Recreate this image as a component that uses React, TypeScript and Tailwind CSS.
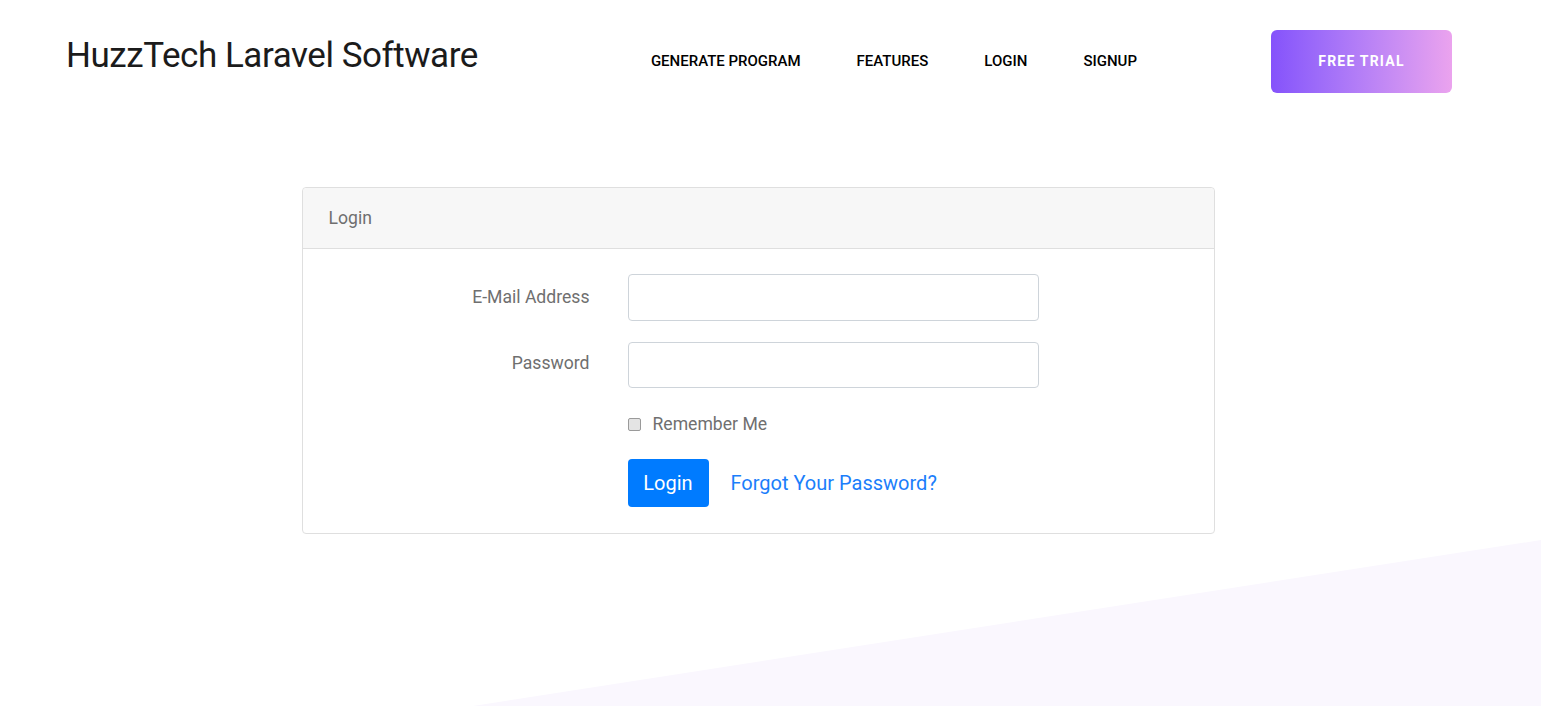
import React from "react";

const App: React.FC = () => {
  return (
    <div className="relative min-h-screen h-[706px] overflow-hidden bg-white font-['Roboto',sans-serif]">
      {/* Background shape */}
      <svg
        className="absolute bottom-0 left-0 w-full h-[706px] pointer-events-none"
        viewBox="0 0 1541 706"
        preserveAspectRatio="none"
      >
        <polygon points="473,706 1541,540 1541,706" fill="#faf7fe" />
      </svg>

      {/* Header */}
      <header className="relative flex items-start pt-[30px] pl-[66px] pr-[89px]">
        <div className="mt-[4px] text-[35px] leading-[44px] text-[#1b1b1b] font-['Roboto',sans-serif] tracking-[-0.45px]">
          HuzzTech Laravel Software
        </div>
        <nav className="flex items-center gap-[56px] ml-[173px] mt-[20px] text-[15px] font-medium text-black">
          <a href="#">GENERATE PROGRAM</a>
          <a href="#">FEATURES</a>
          <a href="#">LOGIN</a>
          <a href="#">SIGNUP</a>
        </nav>
        <button className="ml-auto w-[181px] h-[63px] rounded-[6px] bg-gradient-to-r from-[#8552fb] to-[#eba3ee] text-white text-[14px] font-bold tracking-[1.2px]">
          FREE TRIAL
        </button>
      </header>

      {/* Login card */}
      <main className="relative flex justify-center mt-[94px] pr-[25px]">
        <div className="w-[913px] border border-[#dfdfdf] rounded-[4px] bg-white">
          <div className="h-[61px] flex items-center px-[26px] bg-[#f7f7f7] border-b border-[#dfdfdf] text-[17.6px] text-[#6f6f6f] rounded-t-[4px]">
            Login
          </div>
          <div className="pt-[25px] pb-[26px]">
            <div className="flex items-center">
              <label className="w-[287px] text-right text-[17.6px] text-[#6f6f6f]">E-Mail Address</label>
              <input
                type="email"
                className="ml-[38px] w-[411px] h-[47px] rounded-[4px] border border-[#ced4da] px-3 outline-none"
              />
            </div>
            <div className="flex items-center mt-[21px]">
              <label className="w-[287px] text-right text-[17.6px] text-[#6f6f6f] mb-[3px]">Password</label>
              <input
                type="password"
                className="ml-[38px] w-[411px] h-[46px] rounded-[4px] border border-[#ced4da] px-3 outline-none"
              />
            </div>
            <div className="flex items-center mt-[23px] ml-[325px]">
              <input
                type="checkbox"
                className="appearance-none w-[13px] h-[13px] rounded-[2px] border border-[#9a9a9a] bg-[#e4e4e4]"
              />
              <span className="ml-[12px] text-[17.6px] text-[#6f6f6f]">Remember Me</span>
            </div>
            <div className="flex items-center mt-[22px] ml-[325px]">
              <button className="w-[81px] h-[48px] rounded-[4px] bg-[#007bff] text-white text-[20px]">
                Login
              </button>
              <a href="#" className="ml-[22px] text-[20px] text-[#1b7efb]">
                Forgot Your Password?
              </a>
            </div>
          </div>
        </div>
      </main>
    </div>
  );
};

export default App;
